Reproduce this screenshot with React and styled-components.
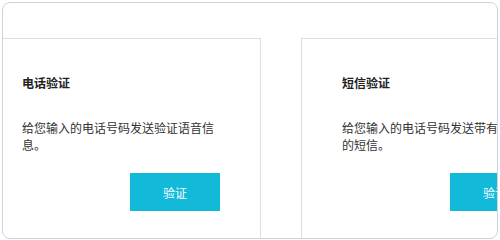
import React from 'react';
import styled, { createGlobalStyle } from 'styled-components';

const GlobalStyle = createGlobalStyle`
  html, body {
    margin: 0;
    padding: 0;
    background: #fff;
  }
  body {
    font-family: "Noto Sans CJK SC", "Liberation Sans", sans-serif;
  }
`

const Frame = styled.section`
  box-sizing: border-box;
  margin: 2px;
  width: 496px;
  height: 237px;
  border: 1px solid #d3d0e0;
  border-radius: 8px;
  overflow: hidden;
  padding-top: 35px;
`

const Track = styled.div`
  display: flex;
  gap: 40px;
  margin-left: -22px;
`

const Card = styled.div`
  box-sizing: border-box;
  flex: 0 0 280px;
  border: 1px solid #dddde2;
  padding: 35px 40px 60px;
`

const Title = styled.h3`
  margin: 0;
  font-size: 12px;
  line-height: 18px;
  font-weight: bold;
  color: #222;
`

const Desc = styled.p`
  margin: 27px 0 0;
  font-size: 12px;
  line-height: 17px;
  color: #333;
`

const Actions = styled.div`
  display: flex;
  justify-content: flex-end;
  margin-top: 20px;
`

const Button = styled.button`
  width: 90px;
  height: 38px;
  border: none;
  background: #12b9d9;
  color: #fff;
  font-family: inherit;
  font-size: 12px;
  cursor: pointer;
`

const methods = [
  { title: '电话验证', desc: '给您输入的电话号码发送验证语音信息。' },
  { title: '短信验证', desc: '给您输入的电话号码发送带有验证码的短信。' },
]

export default function App() {
  return (
    <>
      <GlobalStyle />
      <Frame>
        <Track>
          {methods.map((m) => (
            <Card key={m.title}>
              <Title>{m.title}</Title>
              <Desc>{m.desc}</Desc>
              <Actions>
                <Button>验证</Button>
              </Actions>
            </Card>
          ))}
        </Track>
      </Frame>
    </>
  )
}
